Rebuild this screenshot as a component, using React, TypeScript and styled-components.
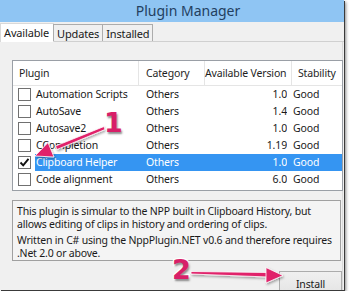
import React from 'react';
import styled, { createGlobalStyle } from 'styled-components';

const GlobalStyle = createGlobalStyle`
  html, body {
    margin: 0;
    padding: 0;
    background: #ffffff;
  }
  body {
    font-family: "Noto Sans", "Open Sans", sans-serif;
  }
`;

type Plugin = {
  name: string;
  category: string;
  version: string;
  stability: string;
  checked?: boolean;
  selected?: boolean;
};

const plugins: Plugin[] = [
  { name: 'Automation Scripts', category: 'Others', version: '1.0', stability: 'Good' },
  { name: 'AutoSave', category: 'Others', version: '1.4', stability: 'Good' },
  { name: 'Autosave2', category: 'Others', version: '1.0', stability: 'Good' },
  { name: 'CCompletion', category: 'Others', version: '1.19', stability: 'Good' },
  { name: 'Clipboard Helper', category: 'Others', version: '1.0', stability: 'Good', checked: true, selected: true },
  { name: 'Code alignment', category: 'Others', version: '6.0', stability: 'Good' },
];

const App: React.FC = () => {
  return (
    <>
      <GlobalStyle />
      <Stage>
        <Window>
          <TitleBar>Plugin Manager</TitleBar>
          <TabStrip>
            <Tab active>Available</Tab>
            <Tab>Updates</Tab>
            <Tab>Installed</Tab>
          </TabStrip>
          <TabPage>
            <ListView>
              <HeaderRow>
                <HeaderCell pad={6}>Plugin</HeaderCell>
                <HeaderCell pad={7}>Category</HeaderCell>
                <HeaderCell pad={0}>Available Version</HeaderCell>
                <HeaderCell pad={6} last>Stability</HeaderCell>
              </HeaderRow>
              {plugins.map((p) => (
                <Row key={p.name}>
                  <CheckArea>
                    <CheckBox>
                      {p.checked && (
                        <svg width="11" height="11" viewBox="0 0 11 11">
                          <path d="M1.5 5.5 L4.2 8.3 L9.5 1.8" fill="none" stroke="#111" strokeWidth="1.9" />
                        </svg>
                      )}
                    </CheckBox>
                  </CheckArea>
                  <RowMain selected={p.selected}>
                    <Cell pad={1}>{p.name}</Cell>
                    <Cell pad={7}>{p.category}</Cell>
                    <Cell pad={0} right>{p.version}</Cell>
                    <Cell pad={6}>{p.stability}</Cell>
                  </RowMain>
                </Row>
              ))}
            </ListView>
            <Description>
              <p>
                This plugin is simular to the NPP built in Clipboard History, but allows editing of clips in
                history and ordering of clips.
              </p>
              <p>Written in C# using the NppPlugin.NET v0.6 and therefore requires .Net 2.0 or above.</p>
            </Description>
            <Footer>
              <Button>Install</Button>
            </Footer>
          </TabPage>
        </Window>

        <Overlay width="349" height="291" viewBox="0 0 349 291">
          <defs>
            <filter id="sh" x="-20%" y="-20%" width="140%" height="140%">
              <feDropShadow dx="1" dy="1.5" stdDeviation="1" floodColor="#000" floodOpacity="0.35" />
            </filter>
          </defs>
          <g filter="url(#sh)" fill="#e0226a" stroke="#ffffff" strokeWidth="0.8">
            <polygon points="104,126.5 105,129.5 57,149.5 55.5,146" />
            <polygon points="35,156 48,142.5 54,157" />
            <polygon points="191,271.5 268,272.5 268,277 191,274" />
            <polygon points="283,275.5 266,267.5 266,283" />
          </g>
        </Overlay>
        <Badge x={104} y={108}>1</Badge>
        <Badge x={172} y={255}>2</Badge>
      </Stage>
    </>
  );
};

const Stage = styled.div`
  position: relative;
  width: 349px;
  height: 291px;
  overflow: hidden;
`;

const Window = styled.div`
  width: 344px;
  height: 290px;
  background: #f0f0f0;
  display: flex;
  flex-direction: column;
  box-shadow: 1px 1px 0 #3a3a3a, 2px 2px 3px rgba(0, 0, 0, 0.45);
  overflow: hidden;
  font-size: 10.5px;
  letter-spacing: -0.15px;
  color: #1a1a1a;
`;

const TitleBar = styled.div`
  height: 22px;
  flex: none;
  background: #8fc5f3;
  color: #23405f;
  font-size: 14px;
  letter-spacing: 0;
  line-height: 22px;
  text-align: center;
  padding-left: 32px;
`;

const TabStrip = styled.div`
  display: flex;
  align-items: flex-end;
  height: 19px;
  flex: none;
  border-bottom: 1px solid #d0d0d0;
`;

const Tab = styled.div<{ active?: boolean }>`
  height: ${(p) => (p.active ? 19 : 17)}px;
  box-sizing: border-box;
  padding: ${(p) => (p.active ? '1px 4px 0 3px' : '1px 3px 0 3px')};
  font-size: 11px;
  letter-spacing: -0.15px;
  line-height: 15px;
  background: ${(p) => (p.active ? '#ffffff' : '#f0f0f0')};
  border: 1px solid ${(p) => (p.active ? '#d9d9d9' : '#acacac')};
  border-bottom: none;
  margin-left: ${(p) => (p.active ? '0' : '-1px')};
  margin-bottom: ${(p) => (p.active ? '-1px' : '0')};
  position: relative;
`;

const TabPage = styled.div`
  flex: 1;
  display: flex;
  flex-direction: column;
  padding: 18px 0 0 12px;
  border-right: 1px solid #d9d9d9;
  margin-right: 1px;
`;

const ListView = styled.div`
  width: 329px;
  height: 129px;
  background: #ffffff;
  border: 1px solid #9a9fa6;
  overflow: hidden;
`;

const HeaderRow = styled.div`
  display: grid;
  grid-template-columns: 126px 66px 87px 1fr;
  height: 24px;
  border-bottom: 1px solid #e5e5e5;
`;

const HeaderCell = styled.div<{ pad: number; last?: boolean }>`
  padding-left: ${(p) => p.pad}px;
  line-height: 24px;
  color: #1e1e1e;
  border-right: ${(p) => (p.last ? 'none' : '1px solid #e5e5e5')};
  white-space: nowrap;
`;

const Row = styled.div`
  display: flex;
  height: 17px;
`;

const CheckArea = styled.div`
  width: 22px;
  flex: none;
  padding-left: 5px;
  box-sizing: border-box;
  display: flex;
  align-items: center;
`;

const CheckBox = styled.div`
  width: 13px;
  height: 13px;
  box-sizing: border-box;
  border: 1px solid #707070;
  background: #ffffff;
  display: flex;
  align-items: center;
  justify-content: center;
`;

const RowMain = styled.div<{ selected?: boolean }>`
  flex: 1;
  display: grid;
  grid-template-columns: 104px 66px 82px 1fr;
  background: ${(p) => (p.selected ? '#3595f2' : 'transparent')};
  color: ${(p) => (p.selected ? '#ffffff' : '#1a1a1a')};
`;

const Cell = styled.div<{ pad: number; right?: boolean }>`
  padding-left: ${(p) => p.pad}px;
  text-align: ${(p) => (p.right ? 'right' : 'left')};
  line-height: 17px;
  white-space: nowrap;
  overflow: hidden;
`;

const Description = styled.div`
  margin-top: 9px;
  width: 329px;
  height: 61px;
  box-sizing: border-box;
  border: 1px solid #a0a0a0;
  background: #f4f4f4;
  padding: 4px 1px 0 4px;
  letter-spacing: -0.2px;
  line-height: 12.5px;

  p {
    margin: 0 0 4px 0;
  }
`;

const Footer = styled.div`
  display: flex;
  justify-content: flex-end;
  width: 330px;
  margin-top: 10px;
`;

const Button = styled.div`
  width: 63px;
  height: 21px;
  box-sizing: border-box;
  border: 1px solid #acacac;
  border-bottom: none;
  background: linear-gradient(#f0f0f0, #e5e5e5);
  text-align: center;
  padding-top: 6px;
  line-height: 13px;
`;

const Overlay = styled.svg`
  position: absolute;
  left: 0;
  top: 0;
  pointer-events: none;
`;

const Badge = styled.span<{ x: number; y: number }>`
  position: absolute;
  left: ${(p) => p.x}px;
  top: ${(p) => p.y}px;
  font-family: "DejaVu Sans", sans-serif;
  font-weight: 900;
  font-size: 27px;
  line-height: 30px;
  color: #d81f68;
  -webkit-text-stroke: 2.5px #ffffff;
  paint-order: stroke fill;
  text-shadow: 1px 2px 2px rgba(0, 0, 0, 0.45);
  pointer-events: none;
`;

export default App;
